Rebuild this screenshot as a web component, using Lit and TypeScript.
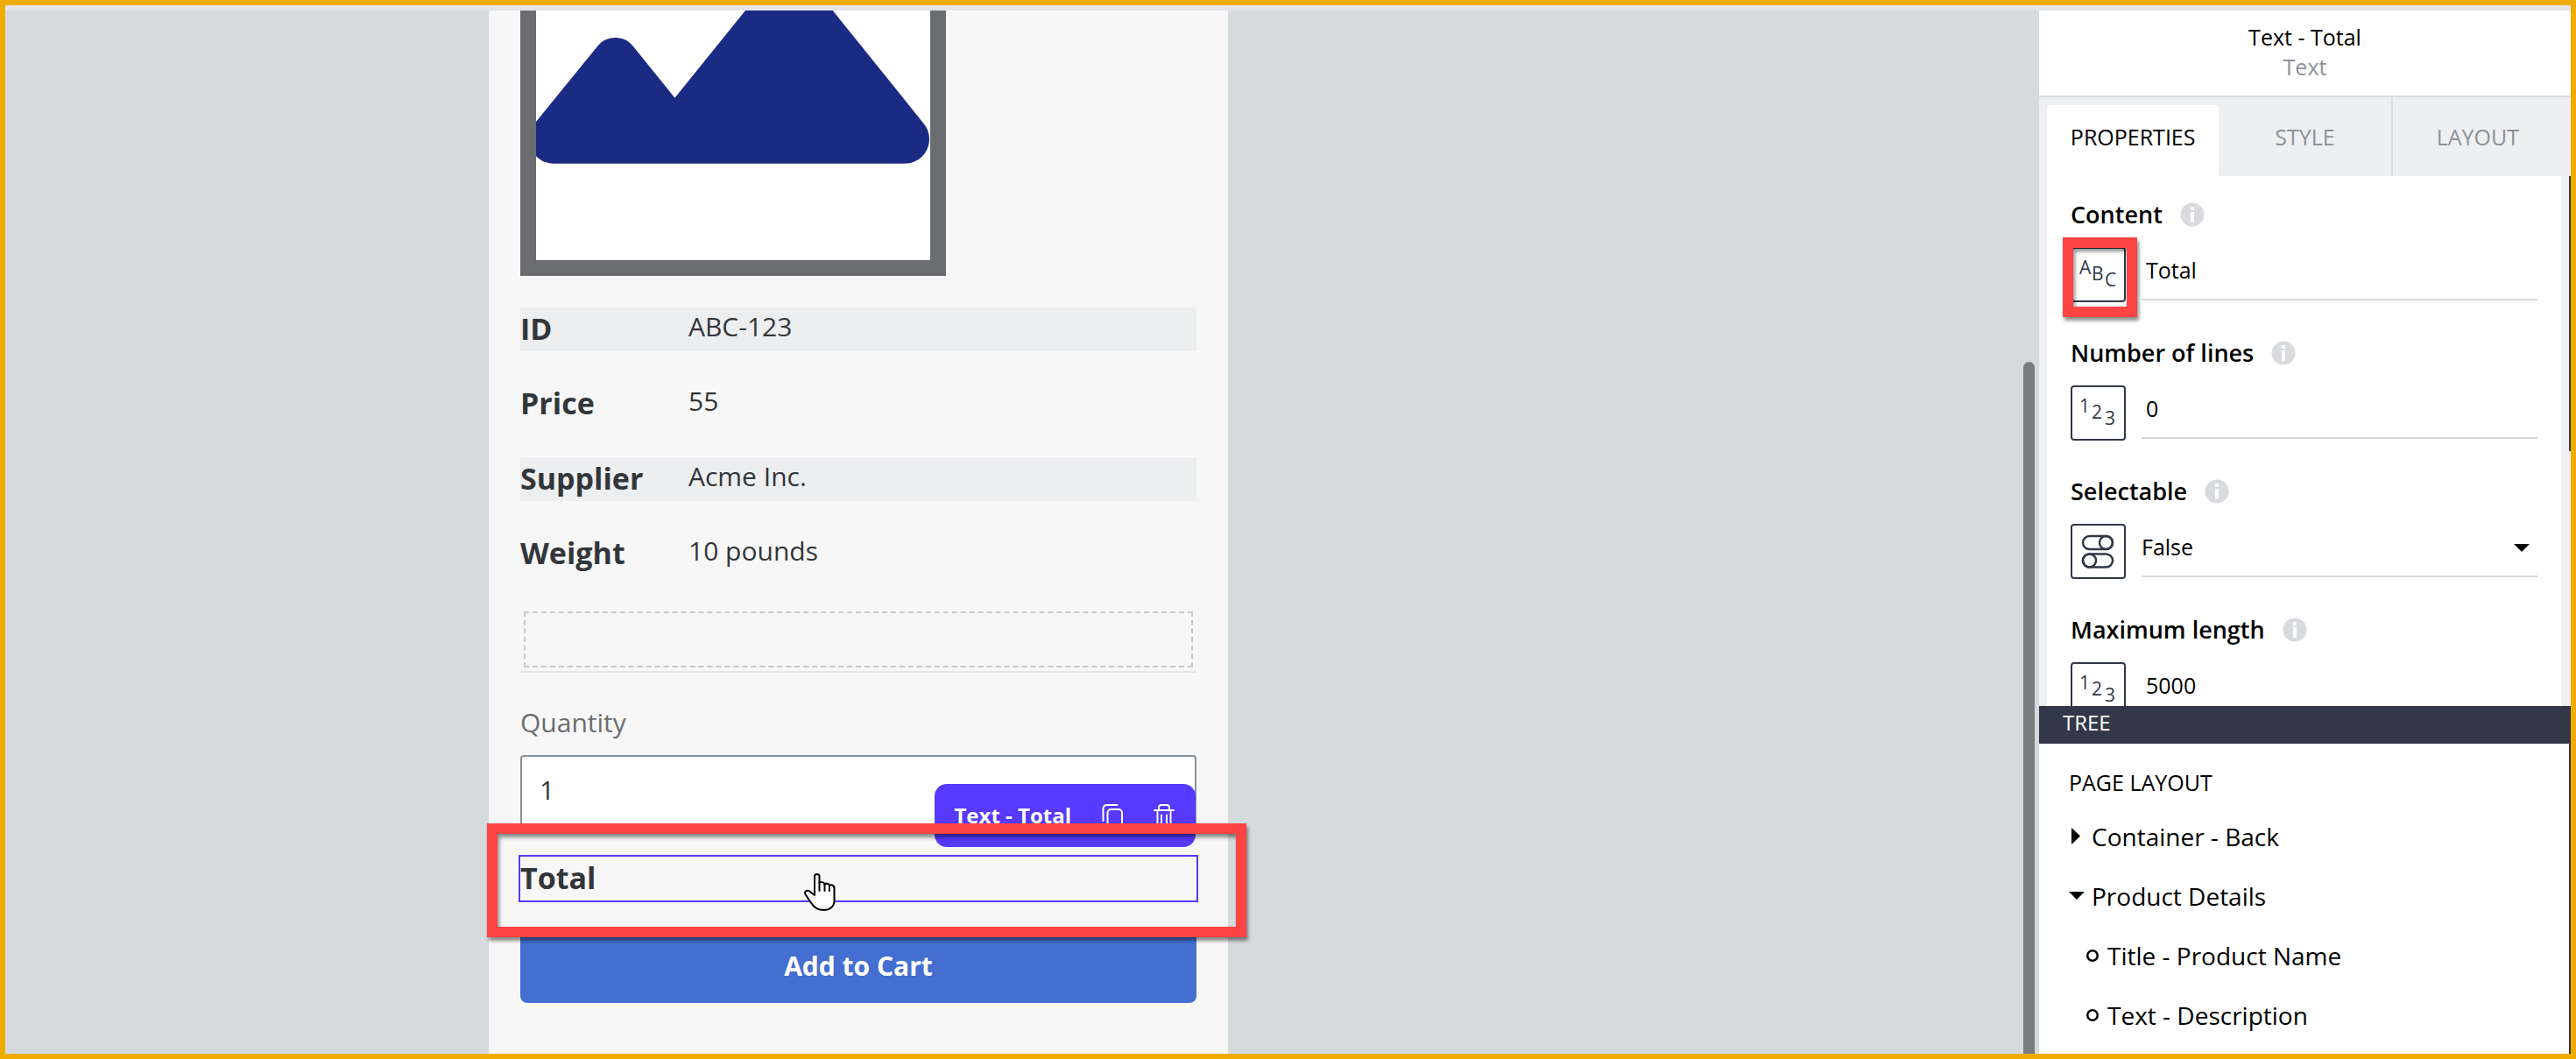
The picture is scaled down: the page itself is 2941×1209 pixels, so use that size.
import { LitElement, html, svg, css } from "lit";
import { customElement, property, state } from "lit/decorators.js";
import { classMap } from "lit/directives/class-map.js";

const shared = css`
  * {
    box-sizing: border-box;
  }
  button,
  input,
  select {
    font: inherit;
    color: inherit;
    margin: 0;
    border: 0;
    border-radius: 0;
    background: none;
    padding: 0;
  }
  svg {
    display: block;
    flex: none;
  }
  .callout {
    position: absolute;
    border: 12px solid #fe4343;
    box-shadow: 2px 4px 4px rgba(0, 0, 0, 0.45), inset 2px 4px 4px rgba(0, 0, 0, 0.45);
    pointer-events: none;
  }
`;

interface Detail {
  label: string;
  value: string;
}

const details: Detail[] = [
  { label: "ID", value: "ABC-123" },
  { label: "Price", value: "55" },
  { label: "Supplier", value: "Acme Inc." },
  { label: "Weight", value: "10 pounds" },
];

@customElement("product-canvas")
export class ProductCanvas extends LitElement {
  static styles = [
    shared,
    css`
      :host {
        display: grid;
        grid-template-columns: 552fr 844px 926fr;
        position: relative;
        min-width: 0;
        overflow: hidden;
        background: #d5dadd;
        color: #32363a;
      }
      .phone {
        grid-column: 2;
        padding: 0 36px;
        background: #f7f7f7;
        font-size: 30px;
        line-height: 40px;
      }
      .picture {
        width: 486px;
        border: 18px solid #6a6c70;
        border-top: 0;
        background: #fff;
      }
      .details {
        display: grid;
        gap: 35px;
        margin: 36px 0 0;
      }
      .detail {
        display: grid;
        grid-template-columns: 192px 1fr;
        height: 51px;
      }
      .detail.band {
        height: 50px;
        background: #edeef0;
      }
      .detail dt,
      .total {
        font-size: 34px;
        font-weight: 700;
        line-height: 48px;
      }
      .detail dd {
        margin: 0;
        line-height: 44px;
      }
      .dropzone {
        margin-top: 36px;
        padding: 4px;
        border-bottom: 2px solid #e5e5e5;
      }
      .slot {
        height: 64px;
        border: 2px dashed #c8c8c8;
      }
      .qty-label {
        display: block;
        margin-top: 37px;
        color: #6a6d70;
      }
      .qty {
        display: block;
        width: 100%;
        height: 84px;
        margin-top: 17px;
        padding: 0 20px 6px;
        border: 2px solid #89919a;
        border-radius: 4px;
        background: #fff;
      }
      .selected {
        position: relative;
        margin: 30px -2px 0;
        border: 2px solid #5739ff;
      }
      .total {
        margin: 0;
        padding-bottom: 2px;
      }
      .toolbar {
        position: absolute;
        right: 1px;
        bottom: 61px;
        display: flex;
        align-items: center;
        height: 72px;
        padding: 0 24px 0 22px;
        border-radius: 14px;
        background: #5739ff;
        color: #fff;
        font-size: 24px;
        font-weight: 700;
        gap: 35px;
      }
      .callout {
        left: -38px;
        right: -57px;
        top: -38px;
        height: 130px;
      }
      .cursor {
        position: absolute;
        left: 324px;
        top: 18px;
      }
      .add {
        display: block;
        width: 100%;
        height: 84px;
        margin-top: 31px;
        border-radius: 8px;
        background: #446ed0;
        color: #fff;
        font-weight: 700;
      }
      .thumb {
        position: absolute;
        right: 5px;
        top: 401px;
        bottom: 0;
        width: 13px;
        border-radius: 7px 7px 0 0;
        background: #7a7c7e;
      }
    `,
  ];

  render() {
    return html`
      <main class="phone">
        <div class="picture">
          <svg width="450" height="285" viewBox="0 0 450 285" role="img" aria-label="Product">
            <path
              fill="#1b2b84"
              d="M0 127 69.8 41.3C75 34.500 82 31 90.500 31S106 34.500 111.200 41.300L158.400 99.700 239 0H338.700L442.300 128.700C447 134.500 449 140 449 146.700C449 162 437 174.700 420.900 174.700H20C12 174.700 5 171.500 0 166.300Z"
            />
          </svg>
        </div>
        <dl class="details">
          ${details.map(
            (d, i) => html`<div class=${classMap({ detail: true, band: i % 2 === 0 })}>
              <dt>${d.label}</dt>
              <dd>${d.value}</dd>
            </div>`,
          )}
        </dl>
        <div class="dropzone"><div class="slot"></div></div>
        <label class="qty-label" for="qty">Quantity</label>
        <input class="qty" id="qty" type="text" inputmode="numeric" value="1" />
        <div class="selected">
          <p class="total">Total</p>
          <div class="toolbar">
            <span>Text - Total</span>
            <button aria-label="Duplicate">
              <svg width="24" height="30" viewBox="0 0 24 30" fill="none" stroke="#fff" stroke-width="2" stroke-linecap="round">
                <path d="M1.500 21V7a4 4 0 0 1 4-4h12" />
                <rect x="6.5" y="8" width="16.500" height="20" rx="4" />
              </svg>
            </button>
            <button aria-label="Delete">
              <svg width="24" height="30" viewBox="0 0 24 30" fill="none" stroke="#fff" stroke-width="2" stroke-linecap="round">
                <path d="M1 9h22M6 9V6a3 3 0 0 1 3-3h6a3 3 0 0 1 3 3v3M4.500 9v16a3 3 0 0 0 3 3h9a3 3 0 0 0 3-3V9M9 14.500v9M15 14.500v9" />
              </svg>
            </button>
          </div>
          <div class="callout"></div>
          <svg class="cursor" width="38" height="46" viewBox="0 0 38 46" stroke="#000" stroke-width="2" stroke-linejoin="round">
            <path
              d="M12 26V4.500C12 1 17.500 1 17.500 4.500V12C17.500 11 23 10 23.500 14C24 12 29 12 29 15.500C30 13.500 34.500 14 34.500 18V33C34.500 39 29 43 22.500 43C15 43 10.500 39 7.500 34L1.500 25C-.5 20.500 5 19.500 8 23Z"
              fill="#fff"
            />
            <path d="M17.500 12V21M23.500 14V21M29 15.500V21" fill="none" stroke-linecap="round" />
          </svg>
        </div>
        <button class="add">Add to Cart</button>
      </main>
      <div class="thumb"></div>
    `;
  }
}

@customElement("property-field")
export class PropertyField extends LitElement {
  @property() label = "";
  @property() value = "";
  @property() kind: "abc" | "123" | "toggle" = "abc";
  @property({ type: Boolean }) marked = false;

  static styles = [
    shared,
    css`
      :host {
        display: block;
        height: 158px;
      }
      .head {
        display: flex;
        align-items: center;
        gap: 20px;
        height: 58px;
        padding-bottom: 16px;
        font-size: 27px;
        line-height: 36px;
        font-weight: 600;
      }
      .row {
        position: relative;
        display: flex;
        gap: 18px;
      }
      .kind {
        flex: none;
        width: 63px;
        height: 63px;
        border: 2px solid #323848;
        border-radius: 4px;
      }
      .glyph {
        fill: #323848;
        font-size: 21px;
      }
      .box {
        position: relative;
        flex: 1;
        height: 61px;
        border-bottom: 2px solid #d6d8dc;
        font-size: 25px;
      }
      .input {
        width: 100%;
        height: 52px;
        padding: 0 5px;
      }
      .select {
        width: 100%;
        height: 52px;
        appearance: none;
      }
      .arrow {
        position: absolute;
        right: 9px;
        top: 23px;
      }
      .callout {
        left: -9px;
        top: -11px;
        width: 85px;
        height: 91px;
      }
    `,
  ];

  private icon() {
    if (this.kind === "toggle") {
      return svg`<g fill="none" stroke="#323848" stroke-width="2.5">
        <rect x="12" y="12" width="34" height="15" rx="7.5"/><circle cx="38.500" cy="19.500" r="7.500"/>
        <rect x="12" y="32.500" width="34" height="15" rx="7.5"/><circle cx="19.500" cy="40" r="7.500"/>
      </g>`;
    }
    const t = this.kind.toUpperCase();
    return svg`<text class="glyph" x="8" y="29">${t[0]}</text>
      <text class="glyph" x="22" y="36">${t[1]}</text>
      <text class="glyph" x="37" y="43">${t[2]}</text>`;
  }

  render() {
    return html`
      <div class="head">
        <label for="field">${this.label}</label>
        <svg width="28" height="28" viewBox="0 0 28 28" aria-hidden="true">
          <circle cx="14" cy="14" r="13.5" fill="#d8dade" />
          <path d="M12 5h4v4h-4zM12 11h4v12h-4z" fill="#fff" />
        </svg>
      </div>
      <div class="row">
        <button class="kind" aria-label="Binding type">
          <svg width="59" height="59" viewBox="0 0 59 59">${this.icon()}</svg>
        </button>
        <div class="box">
          ${this.kind === "toggle"
            ? html`<select class="select" id="field">
                  <option>${this.value}</option>
                </select>
                <svg class="arrow" width="18" height="10" viewBox="0 0 18 10"><path d="M0 0h18l-9 9z" /></svg>`
            : html`<input class="input" id="field" type="text" .value=${this.value} />`}
        </div>
        ${this.marked ? html`<div class="callout"></div>` : ""}
      </div>
    `;
  }
}

type Marker = "closed" | "open" | "leaf";

const tree: { name: string; marker: Marker }[] = [
  { name: "Container - Back", marker: "closed" },
  { name: "Product Details", marker: "open" },
  { name: "Title - Product Name", marker: "leaf" },
  { name: "Text - Description", marker: "leaf" },
];

@customElement("inspector-panel")
export class InspectorPanel extends LitElement {
  @state() private tab = "PROPERTIES";

  static styles = [
    shared,
    css`
      :host {
        display: flex;
        flex-direction: column;
        min-height: 0;
        background: #fff;
        color: #000;
      }
      .title {
        flex: none;
        height: 99px;
        padding-top: 13px;
        border-bottom: 2px solid #d9dbe0;
        font-size: 25px;
        line-height: 34px;
        text-align: center;
      }
      .title h1 {
        margin: 0;
        font: inherit;
      }
      .title p {
        margin: 0;
        color: #8d9199;
      }
      .tabs {
        flex: none;
        display: grid;
        grid-template-columns: repeat(3, 1fr);
        height: 90px;
        padding: 0 9px;
        background: #eeeff1;
      }
      .tab {
        padding-bottom: 1px;
        font-size: 25px;
        color: #8d9199;
      }
      .tab + .tab + .tab {
        border-left: 2px solid #d9dbe0;
      }
      .tab.active {
        margin-top: 9px;
        padding: 0 0 10px;
        border-radius: 4px 4px 0 0;
        background: #fff;
        color: #000;
      }
      .fields {
        position: relative;
        flex: none;
        height: 605px;
        overflow: hidden;
        padding: 23px 27px 0;
        border: solid #eeeff1;
        border-width: 0 11px 0 9px;
        background: #fff;
      }
      .upper {
        position: relative;
      }
      .rail {
        position: absolute;
        right: 0;
        top: 0;
        width: 2px;
        height: 314px;
        background: #323848;
      }
      .bar {
        flex: none;
        height: 43px;
        margin: 0;
        padding-left: 27px;
        background: #323848;
        color: #fff;
        font-size: 24px;
        font-weight: 400;
        line-height: 37px;
      }
      .tree {
        flex: 1;
        overflow: hidden;
        padding: 26px 34px 0;
        border-right: 2px solid #323848;
      }
      .group {
        margin: 0;
        font-size: 25px;
        font-weight: 400;
        line-height: 36px;
      }
      .nodes {
        margin: 10px 0 0;
        padding: 0;
        list-style: none;
        font-size: 28px;
        line-height: 68px;
      }
      .node {
        display: flex;
        align-items: center;
        gap: 8px;
      }
      .node.leaf {
        padding-left: 18px;
      }
    `,
  ];

  private marker(kind: Marker) {
    const shape = {
      closed: svg`<path d="M3 0v19l10-9.500z"/>`,
      open: svg`<path d="M0 5h18l-9 9z"/>`,
      leaf: svg`<circle cx="9" cy="10" r="5.750" fill="none" stroke="#000" stroke-width="2.500"/>`,
    }[kind];
    return html`<svg width="18" height="20" viewBox="0 0 18 20" aria-hidden="true">${shape}</svg>`;
  }

  render() {
    return html`
      <header class="title">
        <h1>Text - Total</h1>
        <p>Text</p>
      </header>
      <div class="tabs" role="tablist">
        ${["PROPERTIES", "STYLE", "LAYOUT"].map(
          (t) => html`<button
            role="tab"
            class=${classMap({ tab: true, active: t === this.tab })}
            aria-selected=${t === this.tab ? "true" : "false"}
            @click=${() => (this.tab = t)}
          >
            ${t}
          </button>`,
        )}
      </div>
      <div class="upper">
        <section class="fields">
          <property-field label="Content" value="Total" kind="abc" marked></property-field>
          <property-field label="Number of lines" value="0" kind="123"></property-field>
          <property-field label="Selectable" value="False" kind="toggle"></property-field>
          <property-field label="Maximum length" value="5000" kind="123"></property-field>
        </section>
        <div class="rail"></div>
      </div>
      <h2 class="bar">TREE</h2>
      <section class="tree">
        <h3 class="group">PAGE LAYOUT</h3>
        <ul class="nodes">
          ${tree.map((n) => html`<li class="node ${n.marker}">${this.marker(n.marker)}<span>${n.name}</span></li>`)}
        </ul>
      </section>
    `;
  }
}

@customElement("app-root")
export class AppRoot extends LitElement {
  static styles = css`
    :host {
      box-sizing: border-box;
      display: grid;
      grid-template-columns: 1fr 607px;
      grid-template-rows: minmax(0, 1fr);
      height: 100vh;
      padding-top: 6px;
      border: 6px solid #f0ab00;
      background: #e3e4e7;
      font-family: "Open Sans", "Noto Sans", sans-serif;
    }
  `;

  render() {
    return html`<product-canvas></product-canvas><inspector-panel></inspector-panel>`;
  }
}
